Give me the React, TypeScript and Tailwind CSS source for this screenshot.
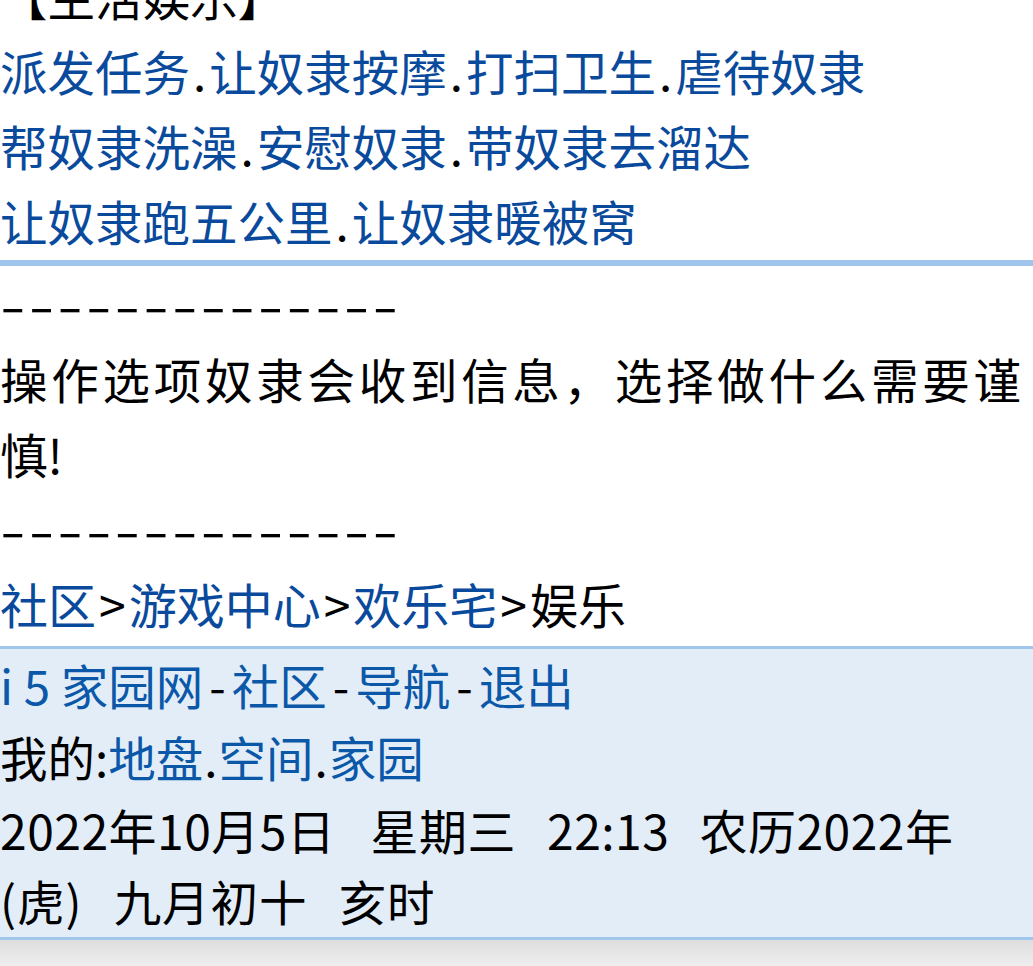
const FONT = { fontFamily: '"Noto Sans CJK SC", "Noto Sans", sans-serif' }

const topLinks = [
  ["派发任务", "让奴隶按摩", "打扫卫生", "虐待奴隶"],
  ["帮奴隶洗澡", "安慰奴隶", "带奴隶去溜达"],
  ["让奴隶跑五公里", "让奴隶暖被窝"],
]

function L({ children }: { children: React.ReactNode }) {
  return <a className="text-[#0a4a9c] no-underline">{children}</a>
}

function FL({ children }: { children: React.ReactNode }) {
  return <a className="text-[#0b58a8] no-underline">{children}</a>
}

function Dashes() {
  return (
    <div className="h-[75px]">
      <span className="inline-block origin-left scale-x-[1.55] tracking-[2px]">--------------</span>
    </div>
  )
}

export default function App() {
  return (
    <div className="h-[966px] overflow-hidden bg-white text-black" style={FONT}>
      <div className="-mt-[42px] text-[47.5px] leading-[75px]">
        <div>【生活娱乐】</div>
        {topLinks.map((row, i) => (
          <div key={i} className="whitespace-nowrap">
            {row.map((t, j) => (
              <span key={t}>
                {j > 0 && <span className="px-[3px]">.</span>}
                <L>{t}</L>
              </span>
            ))}
          </div>
        ))}
      </div>

      <div className="mt-[2px] border-t-[6px] border-[#9fc5ec] text-[47.5px] leading-[75px]">
        <Dashes />
        <div className="w-[1021px] text-justify [text-align-last:justify]">操作选项奴隶会收到信息，选择做什么需要谨</div>
        <div>慎!</div>
        <Dashes />
        <div className="whitespace-nowrap text-[48px]">
          <L>社区</L>
          <span className="px-[3px]">&gt;</span>
          <L>游戏中心</L>
          <span className="px-[3px]">&gt;</span>
          <L>欢乐宅</L>
          <span className="px-[3px]">&gt;</span>娱乐
        </div>
      </div>

      <footer className="mt-[5px] border-y-[3px] border-[#a0c6ec] bg-[#e2edf8] text-[47.5px] leading-[72px]">
        <div className="whitespace-nowrap">
          <FL>i 5 家园网</FL>
          <span className="px-[6px]">-</span>
          <FL>社区</FL>
          <span className="px-[6px]">-</span>
          <FL>导航</FL>
          <span className="px-[6px]">-</span>
          <FL>退出</FL>
        </div>
        <div className="whitespace-nowrap">
          我的:<FL>地盘</FL>
          <span className="px-[1px]">.</span>
          <FL>空间</FL>
          <span className="px-[1px]">.</span>
          <FL>家园</FL>
        </div>
        <div className="whitespace-nowrap text-[48px] tracking-[0.5px]">
          <span>2022年10月5日</span>
          <span className="ml-[35px]">星期三</span>
          <span className="ml-[31px]">22:13</span>
          <span className="ml-[30px]">农历2022年</span>
        </div>
        <div className="whitespace-nowrap tracking-[1px]">
          <span>(虎)</span>
          <span className="ml-[31px]">九月初十</span>
          <span className="ml-[31px]">亥时</span>
        </div>
      </footer>
      <div className="h-[40px] bg-gradient-to-b from-[#dedede] to-[#f7f7f7]" />
    </div>
  )
}
